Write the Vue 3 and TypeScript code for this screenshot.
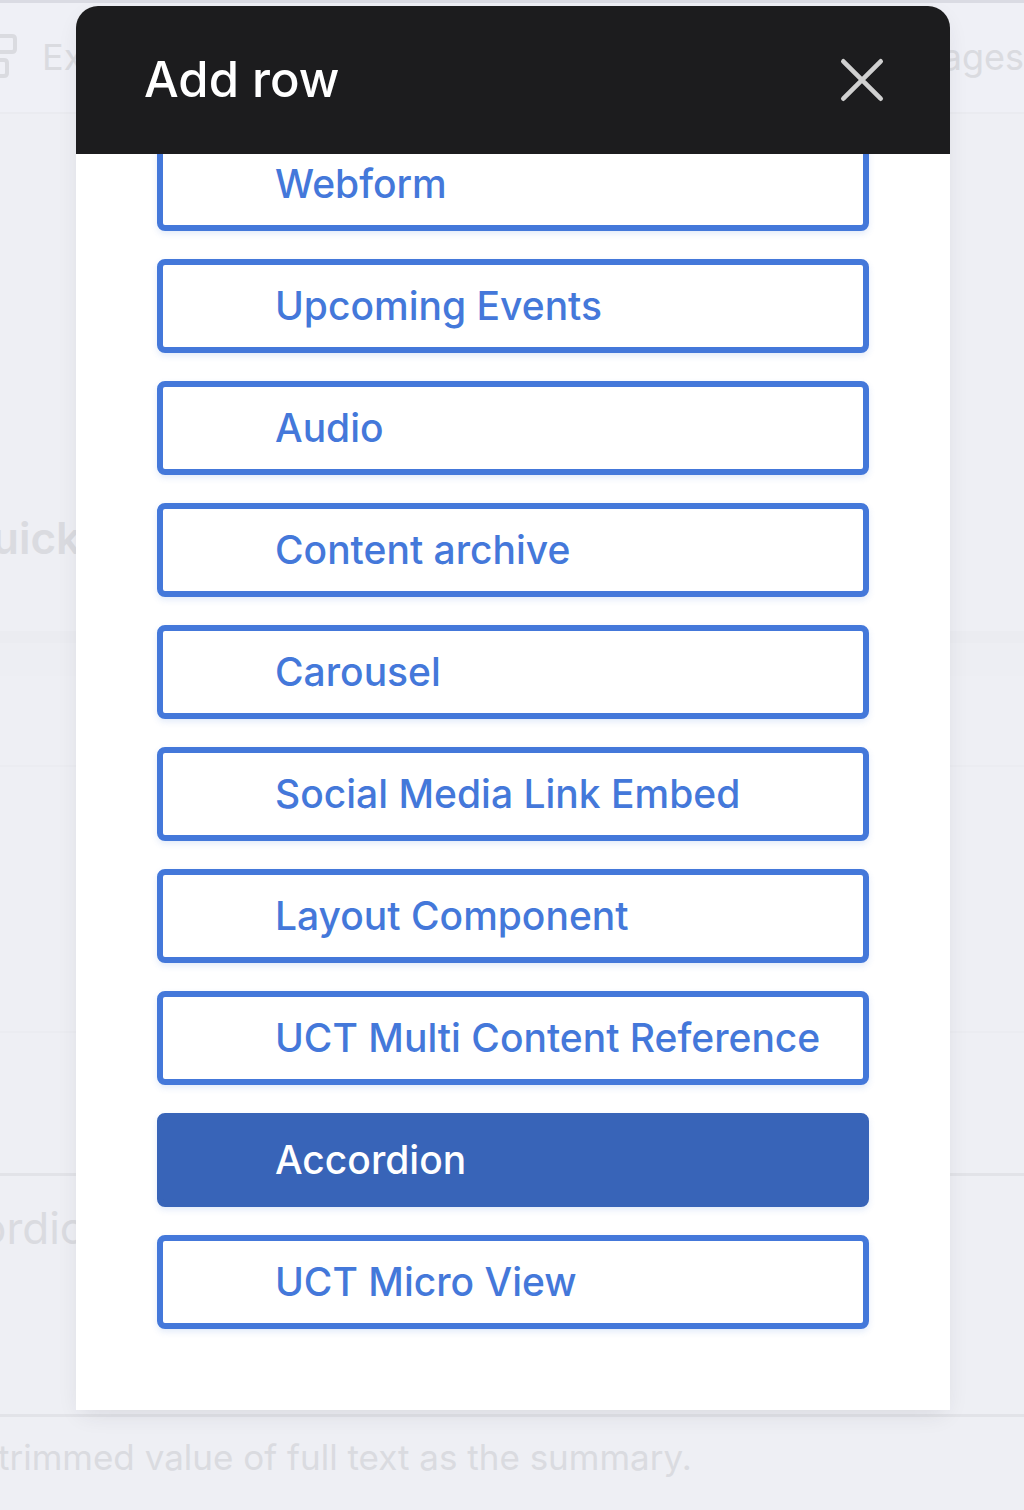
<script setup lang="ts">
import { ref } from 'vue'

const rows: string[] = [
  'Webform',
  'Upcoming Events',
  'Audio',
  'Content archive',
  'Carousel',
  'Social Media Link Embed',
  'Layout Component',
  'UCT Multi Content Reference',
  'Accordion',
  'UCT Micro View',
]

const active = ref<string>('Accordion')
</script>

<template>
  <div class="screen">
    <div class="page" inert>
      <header class="toolbar">
        <span class="tool">
          <svg class="tool-icon" width="20" height="48" viewBox="0 0 20 48" fill="none" stroke="currentColor" stroke-width="4">
            <path d="M-6 3H12Q15 3 15 6V16Q15 19 12 19H-6" />
            <path d="M-6 27H4Q7 27 7 30V40Q7 43 4 43H-6" />
          </svg>
          <span>Ex</span>
        </span>
        <span class="tool">ages</span>
      </header>
      <section class="intro"><h2 class="heading">uick</h2></section>
      <div class="band"></div>
      <div class="subband"></div>
      <div class="block short"></div>
      <div class="block medium"></div>
      <div class="block small"></div>
      <section class="field"><span class="field-text">ordic</span></section>
      <p class="hint">trimmed value of full text as the summary.</p>
    </div>

    <div class="overlay">
      <div class="dialog" role="dialog" aria-modal="true" aria-labelledby="dialog-title">
        <header class="dialog-head">
          <h1 id="dialog-title" class="title">Add row</h1>
          <button class="close" type="button" aria-label="Close">
            <svg width="44" height="44" viewBox="0 0 44 44" fill="none" stroke="currentColor" stroke-width="4.6" stroke-linecap="round">
              <path d="M3.3 3.3L40.7 40.7M40.7 3.3L3.3 40.7" />
            </svg>
          </button>
        </header>
        <div class="dialog-body">
          <ul class="rows">
            <li v-for="row in rows" :key="row">
              <button type="button" class="row" :class="{ active: row === active }" @click="active = row">{{ row }}</button>
            </li>
          </ul>
        </div>
      </div>
    </div>
  </div>
</template>

<style>
body {
  margin: 0;
  background: #eeeff4;
}
</style>

<style scoped>
.screen {
  position: relative;
  min-height: 100vh;
  overflow: hidden;
  font-family: Inter, "Liberation Sans", sans-serif;
  background: #eeeff4;
}

.page {
  color: #dadbe0;
}

.toolbar {
  box-sizing: border-box;
  display: flex;
  justify-content: space-between;
  align-items: center;
  height: 114px;
  padding-bottom: 2px;
  border-top: 3px solid #dadbe3;
  border-bottom: 2px solid #eaebf0;
  background: #eff0f6;
  font-size: 36px;
  line-height: 44px;
}

.tool {
  display: flex;
  align-items: center;
  gap: 22px;
}

.intro {
  box-sizing: border-box;
  height: 517px;
  padding-top: 396px;
}

.heading {
  margin: 0 0 0 -8px;
  font-size: 44px;
  font-weight: 600;
  line-height: 56px;
}

.band {
  height: 12px;
  background: #ebecf1;
}

.subband {
  height: 33px;
  background: #edeef3;
}

.block {
  box-sizing: border-box;
  border-bottom: 2px solid #ebecf1;
}

.short {
  height: 91px;
}

.medium {
  height: 266px;
}

.small {
  height: 143px;
  border-bottom: 3px solid #e2e3e8;
}

.field {
  box-sizing: border-box;
  height: 241px;
  padding-top: 24px;
  border-bottom: 3px solid #e2e3e8;
}

.field-text {
  display: block;
  margin-left: -20px;
  font-size: 44px;
  line-height: 56px;
}

.hint {
  margin: 0 0 0 -2px;
  padding: 18px 0 30px;
  font-size: 35px;
  line-height: 44px;
  white-space: nowrap;
}

.overlay {
  position: absolute;
  inset: 0;
  padding: 6px 74px 0 76px;
}

.dialog {
  border-radius: 22px 22px 0 0;
  background: #fff;
  box-shadow: 0 8px 24px -6px rgba(40, 44, 60, 0.12);
}

.dialog-head {
  display: flex;
  align-items: center;
  justify-content: space-between;
  height: 148px;
  padding: 0 66px 0 68px;
  border-radius: 22px 22px 0 0;
  background: #1c1c1e;
}

.title {
  margin: 0;
  color: #fff;
  font-size: 49px;
  font-weight: 500;
  line-height: 60px;
}

.close {
  display: flex;
  padding: 0;
  border: 0;
  background: none;
  color: #d0d0d0;
  cursor: pointer;
}

.dialog-body {
  overflow: hidden;
  padding: 0 81px 81px;
}

.rows {
  display: flex;
  flex-direction: column;
  gap: 28px;
  margin: -17px 0 0;
  padding: 0;
  list-style: none;
}

.row {
  display: block;
  box-sizing: border-box;
  width: 100%;
  height: 94px;
  padding: 0 0 0 112px;
  border: 6px solid #4478da;
  border-radius: 8px;
  background: #fff;
  box-shadow: 0 3px 6px rgba(68, 120, 218, 0.15);
  color: #4478da;
  font-family: inherit;
  font-size: 39px;
  font-weight: 500;
  line-height: 48px;
  text-align: left;
  white-space: nowrap;
  cursor: pointer;
}

.row.active {
  border-color: #3864b8;
  background: #3864b8;
  color: #fff;
}
</style>
